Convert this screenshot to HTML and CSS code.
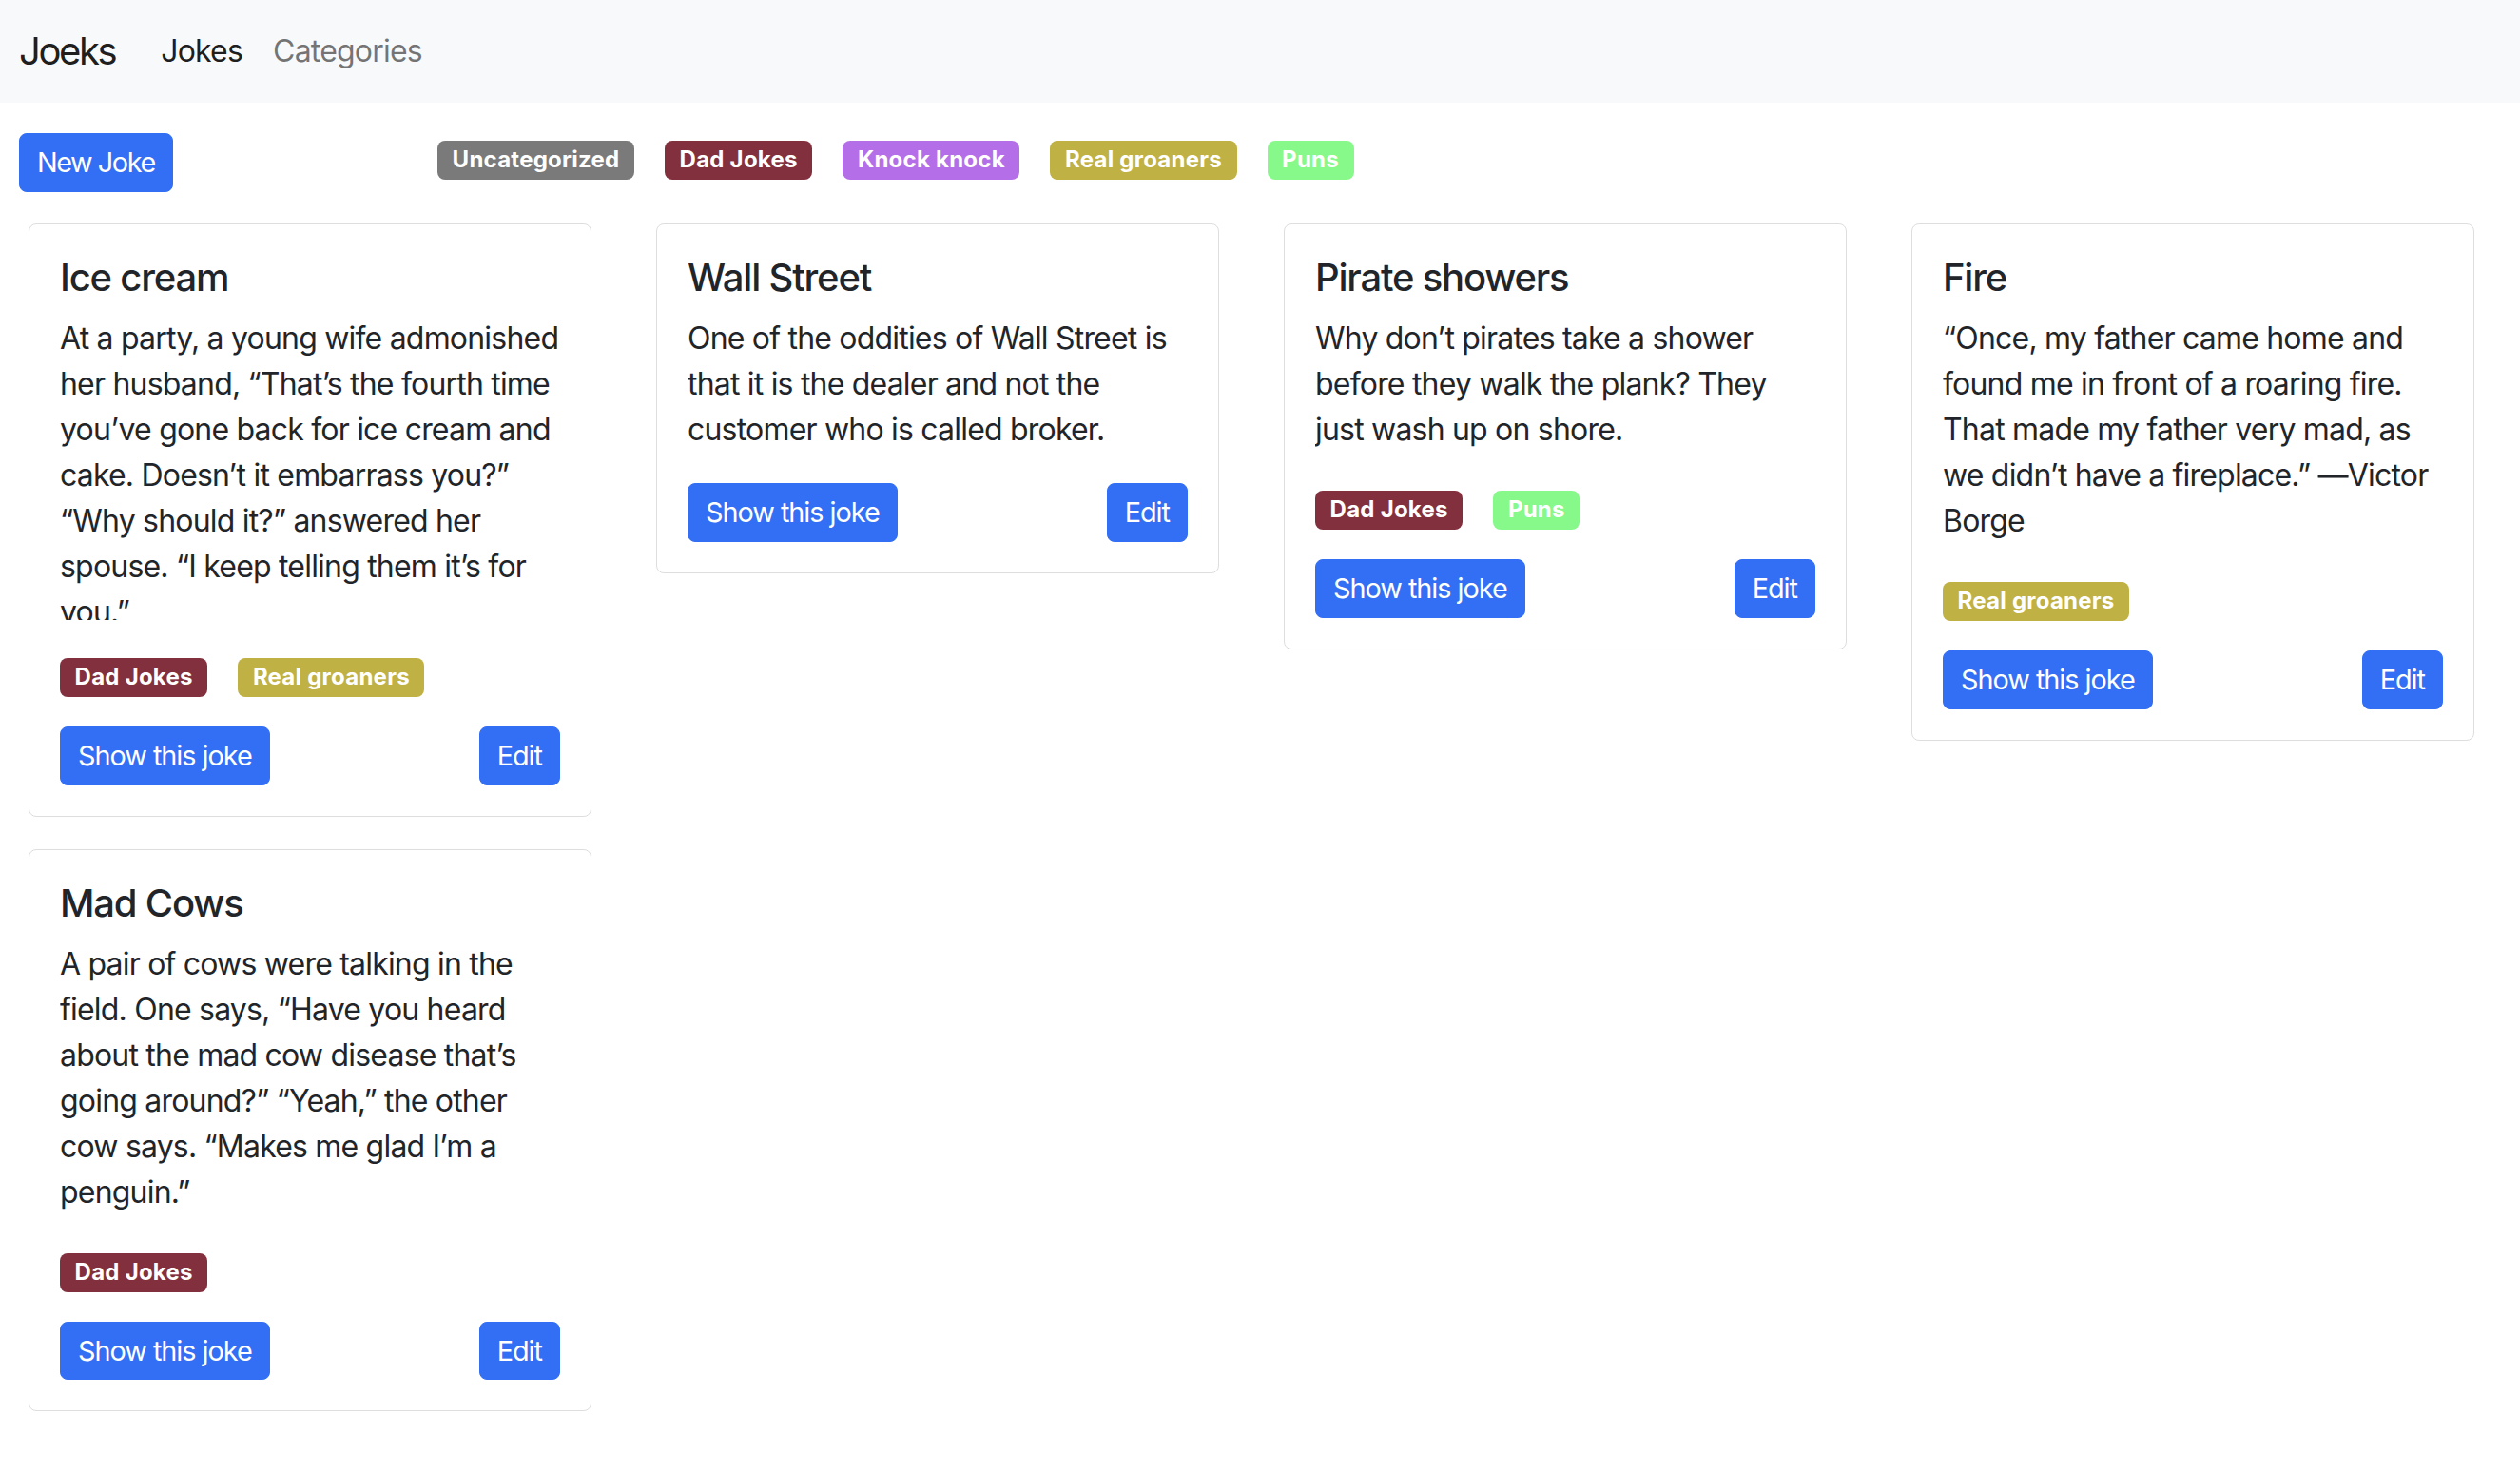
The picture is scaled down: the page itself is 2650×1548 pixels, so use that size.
FILE: index.html
```html
<!DOCTYPE html>
<html lang="en">
<head>
<meta charset="utf-8">
<title>Joeks</title>
<link rel="stylesheet" href="styles.css">
</head>
<body>
<nav class="navbar">
  <a class="brand" href="#">Joeks</a>
  <a class="nav-link active" href="#">Jokes</a>
  <a class="nav-link" href="#">Categories</a>
</nav>
<main class="main">
  <div class="toolbar">
    <div class="toolbar-left"><a class="btn" href="#">New Joke</a></div>
    <div class="filters">
      <span class="badge b-gray">Uncategorized</span>
      <span class="badge b-dad">Dad Jokes</span>
      <span class="badge b-knock">Knock knock</span>
      <span class="badge b-groan">Real groaners</span>
      <span class="badge b-puns">Puns</span>
    </div>
  </div>
  <div class="cards">
    <div class="card">
      <h5 class="card-title">Ice cream</h5>
      <p class="card-text">At a party, a young wife admonished her husband, “That’s the fourth time you’ve gone back for ice cream and cake. Doesn’t it embarrass you?” “Why should it?” answered her spouse. “I keep telling them it’s for you.”</p>
      <div class="tags"><span class="badge b-dad">Dad Jokes</span><span class="badge b-groan">Real groaners</span></div>
      <div class="actions"><a class="btn" href="#">Show this joke</a><a class="btn" href="#">Edit</a></div>
    </div>
    <div class="card">
      <h5 class="card-title">Wall Street</h5>
      <p class="card-text">One of the oddities of Wall Street is that it is the dealer and not the customer who is called broker.</p>
      <div class="actions"><a class="btn" href="#">Show this joke</a><a class="btn" href="#">Edit</a></div>
    </div>
    <div class="card">
      <h5 class="card-title">Pirate showers</h5>
      <p class="card-text">Why don’t pirates take a shower before they walk the plank? They just wash up on shore.</p>
      <div class="tags"><span class="badge b-dad">Dad Jokes</span><span class="badge b-puns">Puns</span></div>
      <div class="actions"><a class="btn" href="#">Show this joke</a><a class="btn" href="#">Edit</a></div>
    </div>
    <div class="card">
      <h5 class="card-title">Fire</h5>
      <p class="card-text">“Once, my father came home and found me in front of a roaring fire. That made my father very mad, as we didn’t have a fireplace.” —&#8288;Victor Borge</p>
      <div class="tags"><span class="badge b-groan">Real groaners</span></div>
      <div class="actions"><a class="btn" href="#">Show this joke</a><a class="btn" href="#">Edit</a></div>
    </div>
    <div class="card">
      <h5 class="card-title">Mad Cows</h5>
      <p class="card-text">A pair of cows were talking in the field. One says, “Have you heard about the mad cow disease that’s going around?” “Yeah,” the other cow says. “Makes me glad I’m a penguin.”</p>
      <div class="tags"><span class="badge b-dad">Dad Jokes</span></div>
      <div class="actions"><a class="btn" href="#">Show this joke</a><a class="btn" href="#">Edit</a></div>
    </div>
  </div>
</main>
</body>
</html>
```
FILE: styles.css
```css
* { box-sizing: border-box; }
body {
  margin: 0;
  font-family: Inter, "Liberation Sans", Arial, sans-serif;
  font-size: 32px;
  line-height: 1.5;
  color: #212529;
  background: #fff;
}
a { text-decoration: none; }

.navbar {
  display: flex;
  align-items: center;
  height: 108px;
  padding: 0 20px;
  background: #f8f9fa;
}
.brand {
  font-size: 40px;
  line-height: 1.5;
  letter-spacing: -0.06em;
  color: rgba(0, 0, 0, 0.9);
  margin-right: 32px;
}
.nav-link {
  padding: 0 16px;
  letter-spacing: -0.025em;
  color: rgba(0, 0, 0, 0.55);
}
.nav-link.active { color: rgba(0, 0, 0, 0.9); }

.main { padding: 32px 20px; }
.toolbar { display: flex; align-items: center; }
.toolbar-left { width: 440px; flex: none; }
.filters { display: flex; gap: 32px; margin-top: -5px; }

.btn {
  display: inline-block;
  font-size: 28.8px;
  line-height: 1.5;
  letter-spacing: -0.035em;
  padding: 8.4px 18px;
  border: 1px solid #336ff4;
  border-radius: 8px;
  background: #336ff4;
  color: #fff;
}
.toolbar .btn { letter-spacing: -0.05em; }

.badge {
  display: inline-block;
  font-size: 24px;
  font-weight: 700;
  line-height: 1;
  letter-spacing: 0.01em;
  padding: 8.4px 15.6px;
  border-radius: 8px;
  color: #fff;
}
.b-gray { background: #7a7a7a; }
.b-dad { background: #83303e; }
.b-knock { background: #b46fe8; }
.b-groan { background: #c0b144; }
.b-puns { background: #86f98a; }

.cards {
  display: flex;
  flex-wrap: wrap;
  align-items: flex-start;
  gap: 34px 68px;
  margin-top: 33px;
  padding-left: 10px;
}
.card {
  width: 592px;
  border: 1px solid #dedede;
  border-radius: 8px;
  padding: 32px;
}
.card-title {
  margin: 0 0 16px;
  font-size: 40px;
  font-weight: 500;
  line-height: 1.2;
  letter-spacing: -0.03em;
}
.card-text {
  margin: 0 0 32px;
  max-height: 320px;
  overflow: hidden;
  letter-spacing: -0.025em;
}
.tags {
  display: flex;
  gap: 32px;
  padding-top: 8px;
  margin-bottom: 31px;
}
.actions {
  display: flex;
  justify-content: space-between;
}
```
